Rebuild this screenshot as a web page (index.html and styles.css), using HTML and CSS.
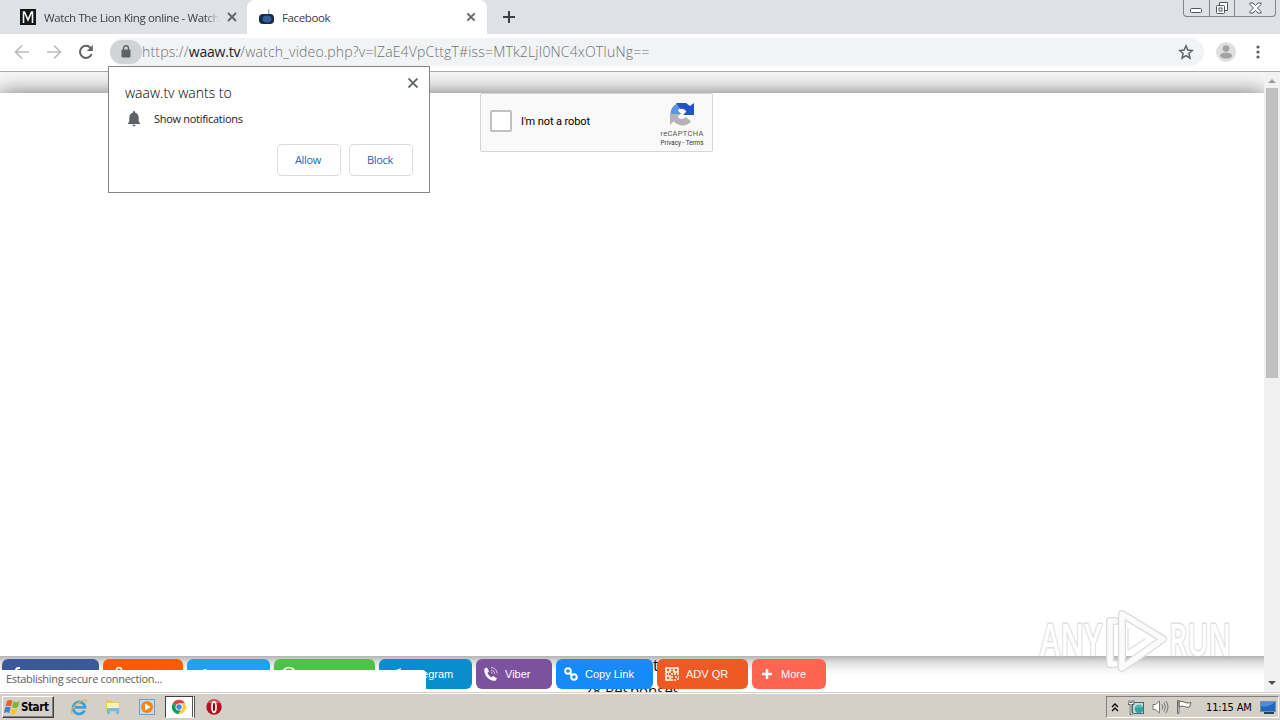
FILE: index.html
```html
<!DOCTYPE html>
<html lang="en">
<head>
    <meta charset="UTF-8">
    <meta name="viewport" content="width=device-width, initial-scale=1.0">
    <title>Facebook</title>
    <link rel="stylesheet" href="styles.css">
</head>
<body>
    <div class="tabstrip">
        <div class="tab">
            <svg class="favicon" width="16" height="16" viewBox="0 0 16 16"><rect width="16" height="16" fill="#161616"/><path d="M3.500 14V3h1L8 11l3.500-8h1v11" fill="none" stroke="#f4f4f4" stroke-width="1.600"/></svg>
            <span class="tab-title fade">Watch The Lion King online - Watch M</span>
            <svg class="tab-close" width="10" height="10" viewBox="0 0 10 10"><path d="M1 1l8 8M9 1L1 9"/></svg>
        </div>
        <div class="tab active">
            <svg class="favicon" width="16" height="16" viewBox="0 0 16 16"><path d="M9 6V0l1.500 1v5z" fill="#a7adb5"/><rect x="0" y="5" width="15" height="10" rx="4" fill="#142c4a"/><ellipse cx="8" cy="10" rx="4.500" ry="3.500" fill="#315f9b"/></svg>
            <span class="tab-title">Facebook</span>
            <svg class="tab-close" width="10" height="10" viewBox="0 0 10 10"><path d="M1.300 1.300l7.400 7.400M8.700 1.300L1.300 8.700"/></svg>
        </div>
        <svg class="new-tab" width="12" height="12" viewBox="0 0 12 12"><path d="M6 0v12M0 6h12"/></svg>
        <div class="window-buttons">
            <span class="win-btn"><svg width="13" height="6" viewBox="0 0 13 6"><rect x=".5" y=".5" width="11" height="4" rx="1"/></svg></span>
            <span class="win-btn"><svg width="14" height="14" viewBox="0 0 14 14"><path d="M4.500 4V1.500h8v8H10"/><rect x="1.500" y="4.500" width="8" height="8" rx="1"/><rect x="4" y="7" width="3" height="3"/></svg></span>
            <span class="win-btn wide"><svg width="13" height="12" viewBox="0 0 13 12"><path d="M1 1h3l2.500 2.600L9 1h3v1.500L8.500 6 12 9.500V11H9L6.500 8.400 4 11H1V9.500L4.500 6 1 2.500z"/></svg></span>
        </div>
    </div>

    <div class="toolbar">
        <svg class="nav disabled" width="16" height="16" viewBox="0 0 16 16"><path d="M15 8H2M8 1.500L1.500 8 8 14.500"/></svg>
        <svg class="nav disabled" width="16" height="16" viewBox="0 0 16 16"><path d="M1 8h13M8 1.500L14.500 8 8 14.500"/></svg>
        <svg class="nav" width="16" height="16" viewBox="0 0 16 16"><path d="M13.600 10A6 6 0 1 1 12.400 3.800L14 5.500"/><path d="M14.800 1v6h-6z" class="solid"/></svg>
        <div class="omnibox">
            <span class="lock"><svg width="10" height="13" viewBox="0 0 10 13"><rect x=".5" y="4.500" width="9" height="8" rx="1" fill="#5f6368"/><path d="M2.500 5V3.200a2.500 2.500 0 0 1 5 0V5" fill="none" stroke="#5f6368" stroke-width="1.400"/></svg></span>
            <span class="url">https://<b>waaw.tv</b>/watch_video.php?v=lZaE4VpCttgT#iss=MTk2LjI0NC4xOTIuNg==</span>
            <svg class="star" width="16" height="16" viewBox="0 0 16 16"><path d="M8 1.800l1.800 4.300 4.600.4-3.500 3 1.100 4.600L8 11.600l-4 2.500 1.100-4.600-3.500-3 4.600-.4z"/></svg>
        </div>
        <svg class="avatar" width="20" height="20" viewBox="0 0 20 20"><circle cx="10" cy="10" r="10" fill="#dfdfdf"/><circle cx="10" cy="6.500" r="3.300" fill="#a3a3a3"/><ellipse cx="10" cy="13.600" rx="6" ry="3" fill="#a3a3a3"/></svg>
        <svg class="menu" width="4" height="14" viewBox="0 0 4 14"><circle cx="2" cy="2" r="1.600"/><circle cx="2" cy="7" r="1.600"/><circle cx="2" cy="12" r="1.600"/></svg>
    </div>

    <div class="viewport">
        <div class="page">
            <div class="overlay">
                <div class="captcha">
                    <span class="checkbox"></span>
                    <span class="captcha-label">I'm not a robot</span>
                    <div class="captcha-brand">
                        <svg width="26" height="26" viewBox="0 0 26 26"><path d="M1.500 13A11.500 11.500 0 0 1 9 2.300L12 6.500Q9 8 9 10l3.500 3z" fill="#5a92e8"/><path d="M7 2h10l4 3 4-3v12H14l3.500-3.500Q15 7 11.500 8z" fill="#2451c4"/><path d="M1 13h10.500L8.700 15.800c2.200 3 5.800 2.700 8.100.2L22 20.500A11.500 11.500 0 0 1 4.600 20.300L1 24z" fill="#b4b4b4"/></svg>
                        <span class="brand-name">reCAPTCHA</span>
                        <span class="brand-links">Privacy - Terms</span>
                    </div>
                </div>
            </div>
            <div class="share-area">
                <span class="heading-end">t</span>
                <span class="responses">28 Responses</span>
                <div class="share-bar">
                    <div class="share facebook"><svg width="16" height="16" viewBox="0 0 16 16"><path d="M11 2H9.500Q7 2 7 4.500V14M4 7h6" class="line"/></svg></div>
                    <div class="share ok"><svg width="16" height="16" viewBox="0 0 16 16"><circle cx="9" cy="4" r="2.500" class="line thin"/><path d="M5 9q4 2 8 0M9 10l-4 5M9 10l4 5" class="line thin"/></svg></div>
                    <div class="share twitter"><svg width="16" height="16" viewBox="0 0 16 16"><path d="M1 14c6 3 13 0 13-8l1.500-2-2 .5C11 1 8 4 8.500 6 5 6 4 6 2.500 5 .5 6 2 8 3 9l-2-.5C1 11 3 12 4 12z" fill="#fff"/></svg></div>
                    <div class="share whatsapp"><svg width="16" height="16" viewBox="0 0 16 16"><circle cx="8" cy="8" r="6.500" class="line thin"/></svg></div>
                    <div class="share telegram"><svg width="16" height="16" viewBox="0 0 16 16"><path d="M0 8l15-6-3 13-4-4-2 3-1-5z" fill="#fff"/></svg><span>Telegram</span></div>
                    <div class="share viber"><svg width="16" height="16" viewBox="0 0 16 16"><path d="M1.500 2.500L4 1.500l2 4-1.500 1.300c.7 2 2 3.500 4 4.700L10 10l4 2.200-1.500 2.500C7 16 0 9 1.500 2.500z" fill="#fff"/><path d="M8 1.500c3.500 0 6 2.500 6 6M8 4c2 0 3.500 1.500 3.500 3.500M8 6.300c1 0 1.300.5 1.300 1.300" fill="none" stroke="#ddcbe9" stroke-width="1"/></svg><span>Viber</span></div>
                    <div class="share copy"><svg width="16" height="16" viewBox="0 0 16 16"><circle cx="5" cy="5" r="2.800" class="line"/><circle cx="11" cy="11" r="2.800" class="line"/><path d="M6.500 6.500l3 3" class="line"/></svg><span>Copy Link</span></div>
                    <div class="share qr"><svg width="16" height="16" viewBox="0 0 16 16"><path d="M2 2h4v4H2zM10 2h4v4h-4zM2 10h4v4H2z" class="line thin"/><path d="M8 1v4M7 8h8M1 8h4M8 10v5M11 11h4M10 14h3M14 12v3" class="line dots"/></svg><span>ADV QR</span></div>
                    <div class="share more"><svg width="16" height="16" viewBox="0 0 16 16"><path d="M8 3v10M3 8h10" class="line thick"/></svg><span>More</span></div>
                </div>
            </div>
        </div>
        <div class="scrollbar">
            <span class="arrow up"></span>
            <span class="thumb"></span>
            <span class="arrow down"></span>
        </div>
    </div>

    <div class="taskbar">
        <div class="start">
            <svg width="17" height="16" viewBox="0 0 17 16"><path d="M3 2q3-2 5.500 0L7 7.500Q4.500 6 1.500 7.500z" fill="#e8622c"/><path d="M9.500 2.500Q12 4 15.500 2L14 8q-3 2-6 0z" fill="#79b83d"/><path d="M1.200 8.500q3-1.500 5.500 0L5.200 14Q3 12.500 0 14z" fill="#3f82d0"/><path d="M7.700 9q3 2 6 .2L12.200 14.500q-3 1.800-6 0z" fill="#f6c52f"/></svg>
            <span>Start</span>
        </div>
        <div class="launchers">
            <svg class="launcher" width="18" height="18" viewBox="0 0 18 18"><path d="M14.500 12.500A6 6 0 1 1 15 9.300H5" fill="none" stroke="#3ba0dd" stroke-width="2.700"/><path d="M2.500 16C-1 14 4 6 11 3c4-2 6-1.300 5 1.500" fill="none" stroke="#dfb44c" stroke-width="1.200"/></svg>
            <svg class="launcher" width="18" height="18" viewBox="0 0 18 18"><path d="M2 2h6l1 2h7v10H2z" fill="#e6cb6c"/><path d="M3 5h12v5H3z" fill="#fff3ae"/><path d="M3 16v-5q0-1 1-1h10q1 0 1 1v5h-3v-3H6v3z" fill="#79bddd"/></svg>
            <svg class="launcher" width="18" height="18" viewBox="0 0 18 18"><rect x="1.500" y="1.500" width="15" height="15" fill="#c4dcef" stroke="#6da0c9"/><circle cx="9" cy="9" r="6" fill="#f08519"/><path d="M7 5.500l5.500 3.500L7 12.500z" fill="#fff"/></svg>
            <span class="launcher running"><svg width="16" height="16" viewBox="0 0 16 16"><path d="M8 8L1.800 4.400A7 7 0 0 1 14.100 4.500H8z" fill="#db4437"/><path d="M8 8L1.800 4.400A7 7 0 0 0 7.500 15L11 9.700z" fill="#0f9d58"/><path d="M14.100 4.500A7 7 0 0 1 7.500 15L11 9.700 8 4.500z" fill="#ffcd40"/><circle cx="8" cy="8" r="3.500" fill="#fff"/><circle cx="8" cy="8" r="2.700" fill="#4285f4"/></svg></span>
            <svg class="launcher" width="18" height="18" viewBox="0 0 18 18"><circle cx="9" cy="9" r="7.700" fill="#b41420"/><path d="M3 5a7.500 7.500 0 0 1 12 0z" fill="#d8686e"/><ellipse cx="9" cy="9" rx="2" ry="5.200" fill="#8b0710" stroke="#fff" stroke-width="1.700"/></svg>
        </div>
        <div class="tray">
            <svg width="8" height="9" viewBox="0 0 8 9"><path d="M1 4l3-3 3 3M1 8l3-3 3 3" fill="none" stroke="#000" stroke-width="1.300"/></svg>
            <svg class="network" width="18" height="16" viewBox="0 0 18 16"><rect x="4.500" y="3.500" width="11" height="11" fill="#b9dfe0" stroke="#4d6768"/><circle cx="11" cy="10" r="4.300" fill="#2fa6a4"/><path d="M8 8.500q3-3 6 0" fill="none" stroke="#85d29a"/><path d="M1 1v3.500h4V1M3 5v10h3" fill="none" stroke="#444" stroke-width="2.400"/><path d="M1 1v3.500h4V1M3 5v10h3" fill="none" stroke="#fff"/></svg>
            <svg class="sound" width="17" height="16" viewBox="0 0 17 16"><path d="M1 5.500h2.500L7.500 2v12L3.500 10.500H1z" fill="#fff" stroke="#777"/><path d="M10 5.500q1.500 2.500 0 5M12 3.500q3 4.500 0 9M14 2q4 6 0 12" fill="none" stroke="#777"/></svg>
            <svg class="flag" width="17" height="16" viewBox="0 0 17 16"><path d="M1.500 1.500h1.500v13H1.500zM3 2.500q3-1 6 1 3 1 6 0L13.500 8q-2.500 1-5-.5Q6 6.500 3 7.800z" fill="#fff" stroke="#666"/></svg>
            <span class="clock">11:15 AM</span>
            <svg class="desktop" width="16" height="14" viewBox="0 0 16 14"><rect x=".5" y="1.500" width="15" height="10" fill="#2465bd" stroke="#7392b4"/><path d="M1 6q7 2 14-4H1z" fill="#4e8cd8"/><path d="M4 13h10" stroke="#26415e" stroke-width="2"/></svg>
        </div>
    </div>

    <div class="permission">
        <svg class="permission-close" width="10" height="10" viewBox="0 0 10 10"><path d="M.5.500l9 9M9.500.500l-9 9"/></svg>
        <div class="permission-title">waaw.tv wants to</div>
        <div class="permission-row">
            <svg width="14" height="16" viewBox="0 0 14 16"><path d="M7 0q1.300 0 1.300 1.800C11 2.500 11.700 5 11.700 7v3.500L13 12.300v.7H1v-.7l1.300-1.800V7c0-2 .7-4.500 3.400-5.200Q5.700 0 7 0zM5.400 13.800h3.200Q8.300 15.500 7 15.500T5.400 13.800z" fill="#5f6368"/></svg>
            <span>Show notifications</span>
        </div>
        <div class="permission-actions">
            <button>Allow</button>
            <button>Block</button>
        </div>
    </div>

    <div class="status">Establishing secure connection...</div>

    <svg class="watermark" width="200" height="72" viewBox="0 0 200 72">
        <g class="mark-text">
            <text x="4" y="51" textLength="62" lengthAdjust="spacingAndGlyphs">ANY</text>
            <text x="133" y="51" textLength="62" lengthAdjust="spacingAndGlyphs">RUN</text>
        </g>
        <g class="mark-edge"><path d="M79 16h-5v43h5"/><path d="M86 9L127 34 86 63z"/></g>
        <g class="mark-fill"><path d="M79 16h-5v43h5"/><path d="M86 9L127 34 86 63z"/><path d="M92 23v22l17-11" class="inner"/></g>
    </svg>
</body>
</html>
```

FILE: styles.css
```css
* {
    box-sizing: border-box;
}

body {
    position: relative;
    display: flex;
    flex-direction: column;
    width: 1280px;
    height: 720px;
    margin: 0;
    overflow: hidden;
    background-color: #fff;
    font-family: "Open Sans", "Noto Sans", sans-serif;
    font-size: 12px;
    color: #202124;
}

svg {
    display: block;
    flex-shrink: 0;
}

/* tabs */
.tabstrip {
    display: flex;
    height: 34px;
    background-color: #dee1e6;
}

.tab {
    display: flex;
    align-items: center;
    width: 247px;
    padding: 0 10px 0 20px;
    border-radius: 0 0 8px 0;
}

.tab.active {
    width: 240px;
    padding: 0 11px 0 12px;
    background-color: #fff;
    border-radius: 8px 8px 0 0;
}

.tab-title {
    flex: 1;
    margin: 0 8px;
    overflow: hidden;
    white-space: nowrap;
    font-size: 11.5px;
    letter-spacing: -0.38px;
    color: #3c4043;
}

.active .tab-title {
    margin-left: 7px;
}

.fade {
    -webkit-mask-image: linear-gradient(to right, #000 92%, transparent);
    mask-image: linear-gradient(to right, #000 92%, transparent);
}

.tab-close path,
.permission-close path {
    stroke: #5f6368;
    stroke-width: 1.8;
}

.new-tab {
    margin: 11px 0 0 16px;
}

.new-tab path {
    stroke: #3c4043;
    stroke-width: 2;
}

.window-buttons {
    display: flex;
    height: 17px;
    margin-left: auto;
    margin-right: 4px;
    border: 1px solid #80858c;
    border-top: 0;
    border-radius: 0 0 4px 4px;
}

.win-btn {
    display: flex;
    justify-content: center;
    align-items: center;
    width: 25px;
}

.win-btn + .win-btn {
    border-left: 1px solid #80858c;
}

.win-btn.wide {
    width: 41px;
}

.win-btn:first-child {
    padding-top: 5px;
}

.win-btn svg {
    fill: #fff;
    stroke: #50545a;
}

/* address bar */
.toolbar {
    display: flex;
    align-items: center;
    height: 38px;
    padding: 0 20px 2px 14px;
    border-bottom: 1px solid #aaa;
}

.nav {
    margin-right: 16px;
    fill: none;
    stroke: #5f6368;
    stroke-width: 2;
}

.nav .solid {
    fill: #5f6368;
    stroke: none;
}

.nav.disabled {
    stroke: #babcbe;
    stroke-width: 1.7;
}

.omnibox {
    display: flex;
    align-items: center;
    width: 1094px;
    height: 28px;
    padding-right: 10px;
    border-radius: 14px;
    background-color: #f1f3f4;
}

.lock {
    display: flex;
    justify-content: center;
    align-items: center;
    width: 32px;
    height: 24px;
    border-radius: 12px;
    background-color: #d1d4d7;
}

.url {
    flex: 1;
    font-size: 14px;
    font-weight: 300;
    letter-spacing: 0.17px;
    white-space: nowrap;
    color: #6d7175;
}

.url b {
    font-weight: 400;
    letter-spacing: -0.2px;
    color: #202124;
}

.star {
    fill: none;
    stroke: #5f6368;
    stroke-width: 1.5;
}

.avatar {
    margin-left: 12px;
}

.menu {
    margin-left: auto;
    fill: #5f6368;
}

/* page */
.viewport {
    display: flex;
    height: 620px;
    overflow: hidden;
}

.page {
    display: flex;
    flex-direction: column;
    width: 1264px;
    padding-top: 21px;
    overflow: hidden;
    background-color: #f7f7f7;
}

.overlay {
    height: 563px;
    padding-left: 480px;
    background-color: #fff;
    box-shadow: 0 0 20px rgba(0, 0, 0, 0.55);
}

.captcha {
    display: flex;
    align-items: center;
    width: 233px;
    height: 59px;
    padding: 0 8px 3px 9px;
    border: 1px solid #d6d6d6;
    border-radius: 2px;
    background-color: #f9f9f9;
    font-family: Roboto, sans-serif;
}

.checkbox {
    width: 22px;
    height: 22px;
    border: 2px solid #c1c1c1;
    border-radius: 2px;
    background-color: #fff;
}

.captcha-label {
    margin-left: 9px;
    font-size: 11px;
    letter-spacing: -0.1px;
    color: #000;
}

.captcha-brand {
    display: flex;
    flex-direction: column;
    align-items: center;
    width: 44px;
    margin-left: auto;
    padding-top: 6px;
    white-space: nowrap;
    color: #555;
}

.brand-name {
    margin-top: 2px;
    font-size: 7.5px;
    line-height: 10px;
    letter-spacing: 0.3px;
}

.brand-links {
    font-size: 6.3px;
    line-height: 9px;
    color: #333;
}

.share-area {
    position: relative;
    height: 36px;
    padding: 3px 0 0 2px;
}

.share-area::before {
    content: "";
    position: absolute;
    inset: 0;
    background: linear-gradient(#b4b4b4, #ddd 6px, #f6f6f6 14px, #fff 20px);
}

.heading-end,
.responses {
    position: absolute;
    font-size: 16px;
    line-height: 20px;
    color: #111;
}

.heading-end {
    top: -1px;
    left: 653px;
}

.responses {
    top: 24px;
    left: 584px;
    font-size: 15px;
    white-space: nowrap;
}

.share-bar {
    position: relative;
    display: flex;
    gap: 4px;
}

.share {
    display: flex;
    align-items: center;
    gap: 6px;
    height: 30px;
    padding-left: 7px;
    border-radius: 6px;
    font-family: "Liberation Sans", Arial, sans-serif;
    font-size: 11px;
    color: #fff;
}

.facebook { width: 97px; background-color: #3b5998; }
.ok { width: 80px; background-color: #ff5a00; }
.twitter { width: 83px; background-color: #1da1f2; }
.whatsapp { width: 101px; background-color: #4dc247; }
.telegram { width: 93px; background-color: #088dcd; }
.viber { width: 76px; background-color: #7c529e; }
.copy { width: 97px; background-color: #168bf7; }
.qr { width: 91px; background-color: #ed5a24; }
.more { width: 74px; background-color: #ff6550; }

.share .line {
    fill: none;
    stroke: #fff;
    stroke-width: 2;
}

.share .line.thin {
    stroke-width: 1.5;
}

.share .line.thick {
    stroke-width: 2.6;
}

.share .line.dots {
    stroke-width: 1.5;
    stroke-dasharray: 2 1;
}

.scrollbar {
    display: flex;
    flex-direction: column;
    align-items: center;
    width: 16px;
    padding: 7px 0 7px;
    background-color: #f1f1f1;
}

.arrow {
    border: 4px solid transparent;
}

.arrow.up {
    border-top: 0;
    border-bottom-color: #a0a0a0;
}

.arrow.down {
    margin-top: auto;
    border-bottom: 0;
    border-top-color: #505050;
}

.thumb {
    width: 12px;
    height: 290px;
    margin-top: 5px;
    background-color: #c1c1c1;
}

/* taskbar */
.taskbar {
    display: flex;
    align-items: center;
    height: 28px;
    padding: 1px 1px 0 2px;
    border-top: 1px solid #d4d0c8;
    box-shadow: inset 0 1px #fff;
    background-color: #d4d0c8;
    font-family: "DejaVu Sans Condensed", "DejaVu Sans", sans-serif;
    color: #000;
}

.start {
    display: flex;
    align-items: center;
    gap: 0;
    width: 52px;
    height: 22px;
    padding-left: 1px;
    border: 1px solid;
    border-color: #fff #404040 #404040 #fff;
    box-shadow: inset -1px -1px #808080;
    font-size: 11.5px;
    font-weight: bold;
    letter-spacing: -0.4px;
}

.launchers {
    display: flex;
    align-items: center;
    margin-left: 16px;
}

.launcher {
    margin-right: 16px;
}

.launcher.running {
    display: flex;
    align-items: center;
    justify-content: center;
    width: 30px;
    height: 22px;
    margin: 0 10px 0 -7px;
    border: 1px solid;
    border-color: #404040 #fff #fff #404040;
    border-right: 3px double #555;
    background-color: #fff;
}

.tray {
    display: flex;
    align-items: center;
    width: 173px;
    height: 22px;
    margin-left: auto;
    padding-left: 4px;
    border: 1px solid;
    border-color: #808080 #fff #fff #808080;
}

.network { margin-left: 9px; }
.sound { margin-left: 6px; }
.flag { margin-left: 7px; }

.clock {
    width: 47px;
    margin-left: 13px;
    font-size: 11px;
    letter-spacing: -0.15px;
    white-space: nowrap;
}

.desktop {
    margin-left: 7px;
}

/* notification prompt */
.permission {
    position: absolute;
    top: 66px;
    left: 108px;
    width: 322px;
    height: 127px;
    padding: 16px;
    border: 1px solid #858585;
    background-color: #fff;
}

.permission-close {
    position: absolute;
    top: 11px;
    right: 11px;
}

.permission-title {
    font-size: 14px;
    font-weight: 300;
    line-height: 20px;
    color: #000;
}

.permission-row {
    display: flex;
    align-items: center;
    gap: 13px;
    height: 16px;
    margin: 8px 0 0 2px;
    font-size: 11px;
    letter-spacing: -0.3px;
}

.permission-row span {
    padding-bottom: 2px;
}

.permission-actions {
    display: flex;
    justify-content: flex-end;
    gap: 8px;
    margin-top: 17px;
}

.permission-actions button {
    width: 64px;
    height: 32px;
    padding: 0 2px 2px 0;
    border: 1px solid #dadce0;
    border-radius: 4px;
    background-color: #fff;
    font-family: inherit;
    font-size: 11px;
    letter-spacing: -0.3px;
    color: #1967b2;
}

.status {
    position: absolute;
    top: 670px;
    left: 0;
    width: 426px;
    height: 22px;
    padding-left: 6px;
    border-top-right-radius: 4px;
    background-color: #fff;
    font-size: 11px;
    letter-spacing: -0.32px;
    line-height: 18px;
    color: #606060;
}

/* corner logo */
.watermark {
    position: absolute;
    top: 605px;
    left: 1036px;
}

.mark-text {
    fill: #fff;
    stroke: rgba(190, 190, 190, 0.5);
    stroke-width: 3;
    stroke-linejoin: round;
    paint-order: stroke;
    font-family: "Open Sans", sans-serif;
    font-size: 46px;
    font-weight: 600;
}

.mark-edge {
    fill: none;
    stroke: #dcdcdc;
    stroke-width: 8;
    stroke-linejoin: round;
    stroke-linecap: round;
}

.mark-fill {
    fill: none;
    stroke: #fbfbfb;
    stroke-width: 5.5;
    stroke-linejoin: round;
    stroke-linecap: round;
}

.mark-fill .inner {
    stroke: #e6e6e6;
    stroke-width: 1.5;
}
```
